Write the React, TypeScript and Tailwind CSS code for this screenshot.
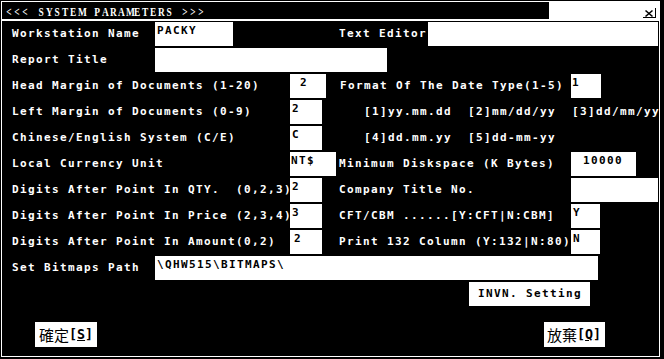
import React from "react";

const M =
  "font-['DejaVu_Sans_Mono',monospace] font-bold text-[11px] tracking-[1.378px] whitespace-pre leading-[14px]";

function Label({ w, children }: { w: string; children: React.ReactNode }) {
  return (
    <div className={`${w} h-[24px] flex items-center pb-[1px] text-white shrink-0 ${M}`}>
      {children}
    </div>
  );
}

function Box({ w, pl = "pl-[2px]", children }: { w: string; pl?: string; children?: React.ReactNode }) {
  return (
    <div className={`${w} ${pl} h-[24px] bg-white text-black pt-[2px] shrink-0 ${M}`}>
      {children}
    </div>
  );
}

function Row({ children }: { children: React.ReactNode }) {
  return <div className="flex h-[26px] pl-[10px] shrink-0">{children}</div>;
}

const TITLE = "<<< SYSTEM PARAMETERS >>>";

export default function App() {
  return (
    <div className="w-[664px] h-[359px] bg-black pt-px pl-px overflow-hidden">
      <div className="w-[659px] h-[356px] border border-white flex flex-col overflow-hidden">
        {/* title bar */}
        <div className="flex h-[17px] shrink-0">
          <div className="flex-1 flex pl-[3px] pt-[4px] text-white font-['Liberation_Serif',serif] font-bold text-[12px] leading-[12px] whitespace-pre">
            {TITLE.split("").map((c, i) => (
              <span key={i} className="inline-block w-[8px] text-center scale-x-[0.78]">
                {c}
              </span>
            ))}
          </div>
          <div className="w-[110px] bg-white">
            <svg width="110" height="17" viewBox="0 0 110 17">
              <path d="M96.5 8.5 L103.5 14.5 M103.5 8.5 L96.5 14.5" stroke="black" strokeWidth="1.6" />
              <rect x="94" y="15" width="12" height="1" fill="black" />
              <rect x="106" y="6" width="1" height="10" fill="black" />
            </svg>
          </div>
        </div>
        <div className="h-[2px] bg-white shrink-0" />

        <div className="flex flex-col pt-px">
          <Row>
            <Label w="w-[143px]">Workstation Name</Label>
            <Box w="w-[78px]">PACKY</Box>
            <div className="w-[106px] shrink-0" />
            <Label w="w-[89px]">Text Editor</Label>
            <Box w="w-[230px]" />
          </Row>
          <Row>
            <Label w="w-[143px]">Report Title</Label>
            <Box w="w-[232px]" />
          </Row>
          <Row>
            <Label w="w-[278px]">Head Margin of Documents (1-20)</Label>
            <Box w="w-[36px]" pl="pl-[10px]">2</Box>
            <div className="w-[14px] shrink-0" />
            <Label w="w-[231px]">Format Of The Date Type(1-5)</Label>
            <Box w="w-[30px]" pl="pl-[1px]">1</Box>
          </Row>
          <Row>
            <Label w="w-[278px]">Left Margin of Documents (0-9)</Label>
            <Box w="w-[32px]">2</Box>
            <div className="w-[42px] shrink-0" />
            <Label w="w-[296px]">{"[1]yy.mm.dd  [2]mm/dd/yy  [3]dd/mm/yy"}</Label>
          </Row>
          <Row>
            <Label w="w-[278px]">Chinese/English System (C/E)</Label>
            <Box w="w-[32px]">C</Box>
            <div className="w-[42px] shrink-0" />
            <Label w="w-[200px]">{"[4]dd.mm.yy  [5]dd-mm-yy"}</Label>
          </Row>
          <Row>
            <Label w="w-[278px]">Local Currency Unit</Label>
            <Box w="w-[46px]" pl="pl-[1px]">NT$</Box>
            <div className="w-[3px] shrink-0" />
            <Label w="w-[232px]">Minimum Diskspace (K Bytes)</Label>
            <Box w="w-[65px]" pl="pl-[12px]">10000</Box>
          </Row>
          <Row>
            <Label w="w-[278px]">{"Digits After Point In QTY.  (0,2,3)"}</Label>
            <Box w="w-[32px]">2</Box>
            <div className="w-[17px] shrink-0" />
            <Label w="w-[232px]">Company Title No.</Label>
            <Box w="w-[87px]" />
          </Row>
          <Row>
            <Label w="w-[278px]">Digits After Point In Price (2,3,4)</Label>
            <Box w="w-[32px]">3</Box>
            <div className="w-[17px] shrink-0" />
            <Label w="w-[232px]">CFT/CBM ......[Y:CFT|N:CBM]</Label>
            <Box w="w-[29px]">Y</Box>
          </Row>
          <Row>
            <Label w="w-[278px]">Digits After Point In Amount(0,2)</Label>
            <Box w="w-[32px]" pl="pl-[4px]">2</Box>
            <div className="w-[17px] shrink-0" />
            <Label w="w-[232px]">Print 132 Column (Y:132|N:80)</Label>
            <Box w="w-[29px]">N</Box>
          </Row>
          <Row>
            <Label w="w-[143px]">Set Bitmaps Path</Label>
            <Box w="w-[443px]">{"\\QHW515\\BITMAPS\\"}</Box>
          </Row>

          <div className="flex shrink-0">
            <div
              className={`ml-[467px] w-[121px] h-[24px] bg-white text-black flex items-center pl-[9px] pb-[1px] ${M}`}
            >
              INVN. Setting
            </div>
          </div>

          <div className="flex mt-[16px] shrink-0">
            <div className="ml-[33px] w-[62px] h-[25px] bg-white text-black flex items-center pl-[4px] whitespace-pre">
              <span className="font-['Noto_Sans_CJK_TC',sans-serif] text-[15px] leading-[18px]">確定</span>
              <span className="font-['DejaVu_Sans_Mono',monospace] font-bold text-[13.33px] leading-[18px]">
                [<span className="underline">S</span>]
              </span>
            </div>
            <div className="ml-[447px] w-[61px] h-[25px] bg-white text-black flex items-center pl-[3px] whitespace-pre">
              <span className="font-['Noto_Sans_CJK_TC',sans-serif] text-[15px] leading-[18px]">放棄</span>
              <span className="font-['DejaVu_Sans_Mono',monospace] font-bold text-[13.33px] leading-[18px]">
                [<span className="underline">Q</span>]
              </span>
            </div>
          </div>
        </div>
      </div>
    </div>
  );
}
